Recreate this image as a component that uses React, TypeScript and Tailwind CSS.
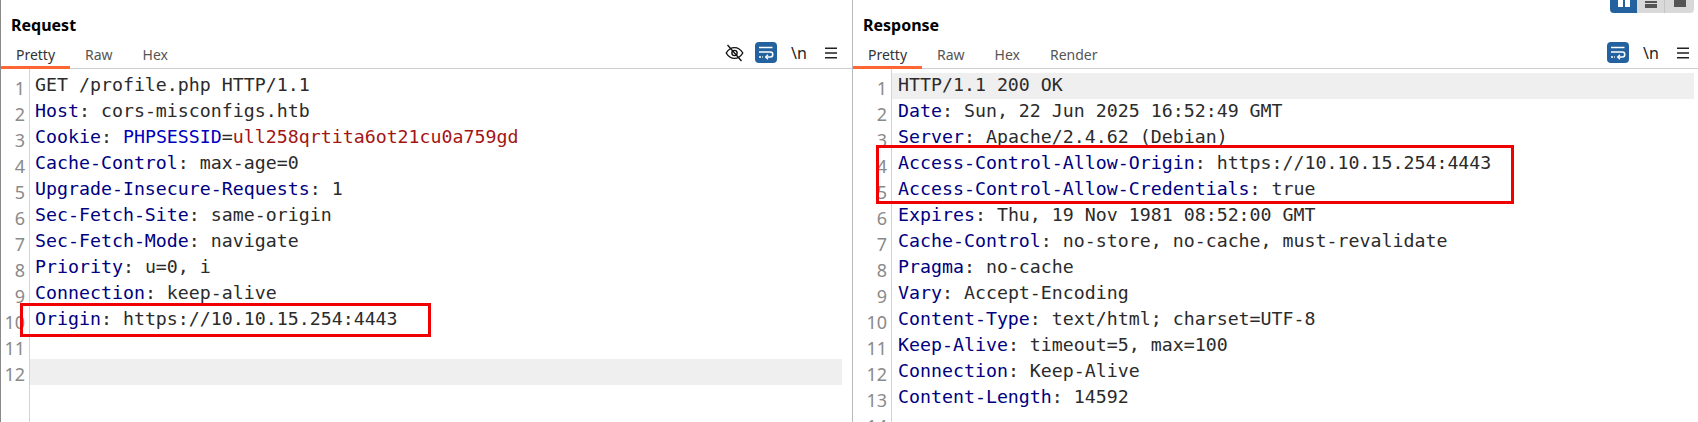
const mono = "font-['DejaVu_Sans_Mono',monospace]";

type Seg = [string, string];
const K = "text-[#000080]";
const V = "text-[#2b2b2b]";
const h = (k: string, v: string): Seg[] => [[k, K], [": " + v, V]];

const req: Seg[][] = [
  [["GET /profile.php HTTP/1.1", V]],
  h("Host", "cors-misconfigs.htb"),
  [["Cookie", K], [": ", V], ["PHPSESSID", "text-[#0000c0]"], ["=", V], ["ull258qrtita6ot21cu0a759gd", "text-[#a31515]"]],
  h("Cache-Control", "max-age=0"),
  h("Upgrade-Insecure-Requests", "1"),
  h("Sec-Fetch-Site", "same-origin"),
  h("Sec-Fetch-Mode", "navigate"),
  h("Priority", "u=0, i"),
  h("Connection", "keep-alive"),
  h("Origin", "https://10.10.15.254:4443"),
  [],
  [],
];

const res: Seg[][] = [
  [["HTTP/1.1 200 OK", V]],
  h("Date", "Sun, 22 Jun 2025 16:52:49 GMT"),
  h("Server", "Apache/2.4.62 (Debian)"),
  h("Access-Control-Allow-Origin", "https://10.10.15.254:4443"),
  h("Access-Control-Allow-Credentials", "true"),
  h("Expires", "Thu, 19 Nov 1981 08:52:00 GMT"),
  h("Cache-Control", "no-store, no-cache, must-revalidate"),
  h("Pragma", "no-cache"),
  h("Vary", "Accept-Encoding"),
  h("Content-Type", "text/html; charset=UTF-8"),
  h("Keep-Alive", "timeout=5, max=100"),
  h("Connection", "Keep-Alive"),
  h("Content-Length", "14592"),
  [],
];

function WrapIcon() {
  return (
    <span className="flex h-[21px] w-[22px] items-center justify-center rounded-[4px] bg-[#24629f]">
      <svg width="16" height="14" viewBox="0 0 16 14" fill="none" stroke="white" strokeWidth="1.5">
        <path d="M1 1.5H14.5" />
        <path d="M1 6H12.5C15.5 6 15.5 11 12.5 11H8" />
        <path d="M10 8.8L7.6 11L10 13.2" strokeWidth="1.2" />
        <path d="M1 11H5" strokeDasharray="2 1.2" />
      </svg>
    </span>
  );
}

function Tools({ eye, end }: { eye?: boolean; end: string }) {
  return (
    <div className={"flex items-center " + end}>
      {eye && (
        <svg width="19" height="18" viewBox="0 0 19 18" fill="none" stroke="#111" strokeWidth="1.4" className="mr-[11px]">
          <path d="M1.2 9C3.4 5.3 6.2 3.6 9.5 3.6S15.6 5.3 17.8 9C15.6 12.7 12.8 14.4 9.5 14.4S3.4 12.7 1.2 9Z" />
          <circle cx="9.5" cy="9" r="2.6" />
          <path d="M2.5 1L16.5 17" />
        </svg>
      )}
      <WrapIcon />
      <span className="ml-[14px] w-[14px] font-['Noto_Sans',sans-serif] text-[16px] leading-none text-[#222]">\n</span>
      <svg width="14" height="12" viewBox="0 0 14 12" stroke="#222" strokeWidth="1.6" className="ml-[19px]">
        <path d="M1 1.2H13M1 6H13M1 10.8H13" />
      </svg>
    </div>
  );
}

function Tabs({ items }: { items: string[] }) {
  return (
    <div className="flex h-[27px]">
      {items.map((t, i) => (
        <div
          key={t}
          className={
            i === 0
              ? "flex h-[28px] w-[69px] items-center justify-center border-b-[3px] border-[#ff6633] pt-[1px] text-[#333]"
              : "flex h-[27px] items-center px-[15px] text-[#555]"
          }
        >
          {t}
        </div>
      ))}
    </div>
  );
}

function Code({ lines, gutter, active, barRight, inset }: { lines: Seg[][]; gutter: string; active: number; barRight: string; inset: string }) {
  return (
    <div className="relative flex min-h-0 flex-1 overflow-hidden">
      <div className={"shrink-0 border-r border-[#d4d4d4] pt-[4px] " + gutter}>
        {lines.map((_, i) => (
          <div key={i} className="h-[26px] pr-[4px] pt-[2px] text-right font-['Noto_Sans',sans-serif] text-[18px] leading-[26px] text-[#8a8a8a]">
            {i + 1}
          </div>
        ))}
      </div>
      <div className={"min-w-0 flex-1 pt-[4px] " + barRight}>
        {lines.map((l, i) => (
          <div key={i} className={"h-[26px] whitespace-pre text-[18.25px] leading-[23px] " + inset + " " + mono + (i === active ? " bg-[#efefef]" : "")}>
            {l.map(([t, c], j) => (
              <span key={j} className={c}>{t}</span>
            ))}
          </div>
        ))}
      </div>
    </div>
  );
}

export default function App() {
  return (
    <div className="relative flex h-[422px] w-[1698px] overflow-hidden bg-white font-['Noto_Sans',sans-serif] text-[14px]">
      <section className="flex w-[853px] shrink-0 flex-col border-l border-l-[#8a8a8a] border-r border-r-[#b8b8b8]">
        <h2 className="h-[40px] pl-[10px] pt-[14px] text-[16px] font-bold leading-[22px] text-black">Request</h2>
        <div className="flex h-[29px] items-end justify-between border-b border-[#ccd0d0]">
          <Tabs items={["Pretty", "Raw", "Hex"]} />
          <div className="pb-[5px]"><Tools eye end="mr-[14px]" /></div>
        </div>
        <Code lines={req} gutter="w-[29px]" active={11} barRight="pr-[10px]" inset="pl-[5px]" />
      </section>

      <section className="flex min-w-0 flex-1 flex-col">
        <h2 className="h-[40px] pl-[10px] pt-[14px] text-[16px] font-bold leading-[22px] text-black">Response</h2>
        <div className="flex h-[29px] items-end justify-between border-b border-[#ccd0d0]">
          <Tabs items={["Pretty", "Raw", "Hex", "Render"]} />
          <div className="pb-[5px]"><Tools end="mr-[8px]" /></div>
        </div>
        <Code lines={res} gutter="w-[39px]" active={0} barRight="pr-[4px]" inset="pl-[6px]" />
      </section>

      {/* layout switcher cut off by the top edge */}
      <div className="absolute right-[4px] top-0 flex h-[13px] w-[84px] overflow-hidden rounded-b-[4px] bg-[#d9d9d9]">
        <div className="flex w-[27px] justify-center gap-[2px] bg-[#24629f]">
          <span className="h-[7px] w-[5px] bg-white" />
          <span className="h-[7px] w-[5px] bg-white" />
        </div>
        <div className="flex w-[28px] flex-col items-center gap-[1px] border-r border-[#c4c4c4] pt-[1px]">
          <span className="h-[2px] w-[12px] bg-[#555]" />
          <span className="h-[4px] w-[12px] bg-[#555]" />
        </div>
        <div className="flex flex-1 justify-center">
          <span className="h-[7px] w-[12px] bg-[#555]" />
        </div>
      </div>

      {/* red annotation boxes */}
      <div className="pointer-events-none absolute left-[20px] top-[303px] h-[34px] w-[411px] border-[3px] border-[#f00000]" />
      <div className="pointer-events-none absolute left-[876px] top-[145px] h-[59px] w-[638px] border-[3px] border-[#f00000]" />
    </div>
  );
}
